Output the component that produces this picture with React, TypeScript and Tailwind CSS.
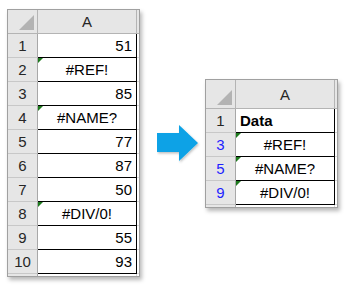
import React from 'react';

type Row = { num: string; value: string; align: 'right' | 'center' | 'left'; error?: boolean; bold?: boolean; blue?: boolean };

const leftRows: Row[] = [
  { num: '1', value: '51', align: 'right' },
  { num: '2', value: '#REF!', align: 'center', error: true },
  { num: '3', value: '85', align: 'right' },
  { num: '4', value: '#NAME?', align: 'center', error: true },
  { num: '5', value: '77', align: 'right' },
  { num: '6', value: '87', align: 'right' },
  { num: '7', value: '50', align: 'right' },
  { num: '8', value: '#DIV/0!', align: 'center', error: true },
  { num: '9', value: '55', align: 'right' },
  { num: '10', value: '93', align: 'right' },
];

const rightRows: Row[] = [
  { num: '1', value: 'Data', align: 'left', bold: true },
  { num: '3', value: '#REF!', align: 'center', error: true, blue: true },
  { num: '5', value: '#NAME?', align: 'center', error: true, blue: true },
  { num: '9', value: '#DIV/0!', align: 'center', error: true, blue: true },
];

const Sheet: React.FC<{ rows: Row[]; headerH: string; className: string }> = ({ rows, headerH, className }) => {
  return (
    <div className={`w-[133px] border border-[#a0a0a0] bg-white shadow-[2px_3px_4px_rgba(0,0,0,0.28)] ${className}`}>
      {/* column header */}
      <div className={`flex ${headerH} bg-[#e6e6e6] border-b border-[#b4b4b4]`}>
        <div className="relative w-[30px] border-r border-[#b4b4b4]">
          <svg className="absolute right-[3px] bottom-[3px]" width="15" height="15" viewBox="0 0 15 15">
            <polygon points="15,0 15,15 0,15" fill="#b3b3b3" />
          </svg>
        </div>
        <div className="w-[99px] flex items-center justify-center border-r border-[#b4b4b4] text-[15px] text-[#262626]">A</div>
        <div className="w-[2px]" />
      </div>
      {rows.map((r) => (
        <div key={r.num + r.value} className="flex h-[24px]">
          <div
            className={`w-[30px] flex items-center justify-center bg-[#e6e6e6] border-r border-b border-[#a8a8a8] border-b-[#c8c8c8] text-[15px] ${
              r.blue ? 'text-[#1f1fff]' : 'text-[#262626]'
            }`}
          >
            {r.num}
          </div>
          <div
            className={`relative w-[99px] flex items-center border-r border-b border-black px-[4px] text-[15px] text-black ${
              r.align === 'right' ? 'justify-end' : r.align === 'center' ? 'justify-center' : 'justify-start'
            } ${r.bold ? 'font-bold' : ''}`}
          >
            {r.error && (
              <svg className="absolute left-0 top-0" width="5" height="5" viewBox="0 0 5 5">
                <polygon points="0,0 5,0 0,5" fill="#1d7a1d" />
              </svg>
            )}
            {r.value}
          </div>
          <div className="w-[2px] border-b border-[#d8d8d8]" />
        </div>
      ))}
      <div className="flex h-[2px]">
        <div className="w-[30px] bg-[#e6e6e6] border-r border-[#a8a8a8]" />
        <div className="w-[99px] border-r border-[#d8d8d8]" />
      </div>
    </div>
  );
};

const App: React.FC = () => {
  return (
    <div className="w-[346px] h-[289px] bg-white flex items-start font-['Liberation_Sans',Arial,sans-serif] leading-none">
      <Sheet rows={leftRows} headerH="h-[24px]" className="ml-[7px] mt-[9px]" />
      <svg className="ml-[17px] mt-[124px]" width="46" height="40" viewBox="0 0 46 40">
        <defs>
          <filter id="sh" x="-20%" y="-20%" width="150%" height="150%">
            <feDropShadow dx="1" dy="1.5" stdDeviation="1.2" floodColor="#000" floodOpacity="0.25" />
          </filter>
        </defs>
        <polygon points="0,9 22,9 22,1 41,19 22,37 22,28 0,28" fill="#08a2e6" filter="url(#sh)" />
      </svg>
      <Sheet rows={rightRows} headerH="h-[29px]" className="ml-[2px] mt-[79px]" />
    </div>
  );
};

export default App;
